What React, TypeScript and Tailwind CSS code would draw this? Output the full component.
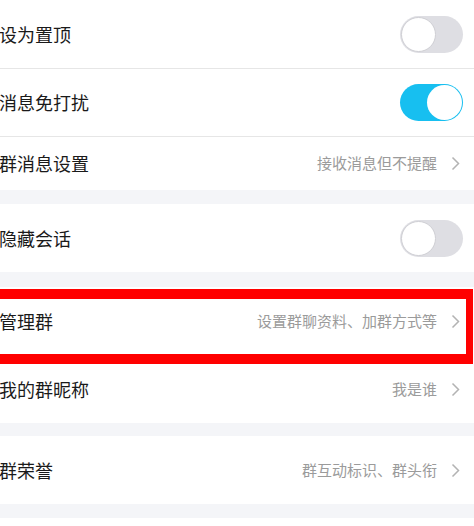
import React from "react";

const FONT = { fontFamily: '"Noto Sans CJK SC", "Noto Sans", sans-serif' };

function Toggle({ on }: { on: boolean }) {
  return (
    <div
      className={`relative w-[63px] h-[37px] rounded-full ${
        on ? "bg-[#17bff0]" : "bg-[#dedee3]"
      }`}
    >
      <div
        className={`absolute top-[1px] w-[35px] h-[35px] rounded-full bg-white ${
          on ? "right-[1px]" : "left-[1px] border border-[#cfcfd4]"
        }`}
      />
    </div>
  );
}

function Chevron() {
  return (
    <svg width="9" height="15" viewBox="0 0 9 15" fill="none">
      <path d="M1.5 1.5 L7.5 7.5 L1.5 13.5" stroke="#b3b3b3" strokeWidth="1.5" />
    </svg>
  );
}

function Row({
  label,
  value,
  toggle,
  height = "h-[68px]",
  divider,
}: {
  label: string;
  value?: string;
  toggle?: boolean;
  height?: string;
  divider?: boolean;
}) {
  return (
    <div
      className={`flex items-center justify-between bg-white ${height} ${
        divider ? "border-b border-[#e6e6e6]" : ""
      }`}
    >
      <span className="text-[18px] text-[#1a1a1a] -ml-[1px]">{label}</span>
      {toggle !== undefined ? (
        <div className="pr-[11px]">
          <Toggle on={toggle} />
        </div>
      ) : (
        <div className="flex items-center gap-[14px] pr-[14px]">
          <span className="text-[15px] text-[#9b9b9b]">{value}</span>
          <Chevron />
        </div>
      )}
    </div>
  );
}

function Gap({ h }: { h: string }) {
  return <div className={`bg-[#f4f5f8] ${h}`} />;
}

export default function App() {
  return (
    <div className="w-[474px] h-[526px] bg-white overflow-hidden" style={FONT}>
      <Row label="设为置顶" toggle={false} height="h-[69px]" divider />
      <Row label="消息免打扰" toggle={true} height="h-[68px]" divider />
      <Row label="群消息设置" value="接收消息但不提醒" height="h-[53px]" />
      <Gap h="h-[14px]" />
      <Row label="隐藏会话" toggle={false} height="h-[68px]" />
      <Gap h="h-[15px]" />
      <div className="relative">
        <Row label="管理群" value="设置群聊资料、加群方式等" height="h-[68px]" />
        {/* highlight frame */}
        <div className="absolute top-[2px] -bottom-[9px] -left-[10px] right-[1px] border-[#ff0000] border-y-[10px] border-l-[10px] border-r-[7px]" />
      </div>
      <Row label="我的群昵称" value="我是谁" height="h-[68px]" />
      <Gap h="h-[13px]" />
      <Row label="群荣誉" value="群互动标识、群头衔" height="h-[68px]" />
      <Gap h="h-[14px]" />
    </div>
  );
}
